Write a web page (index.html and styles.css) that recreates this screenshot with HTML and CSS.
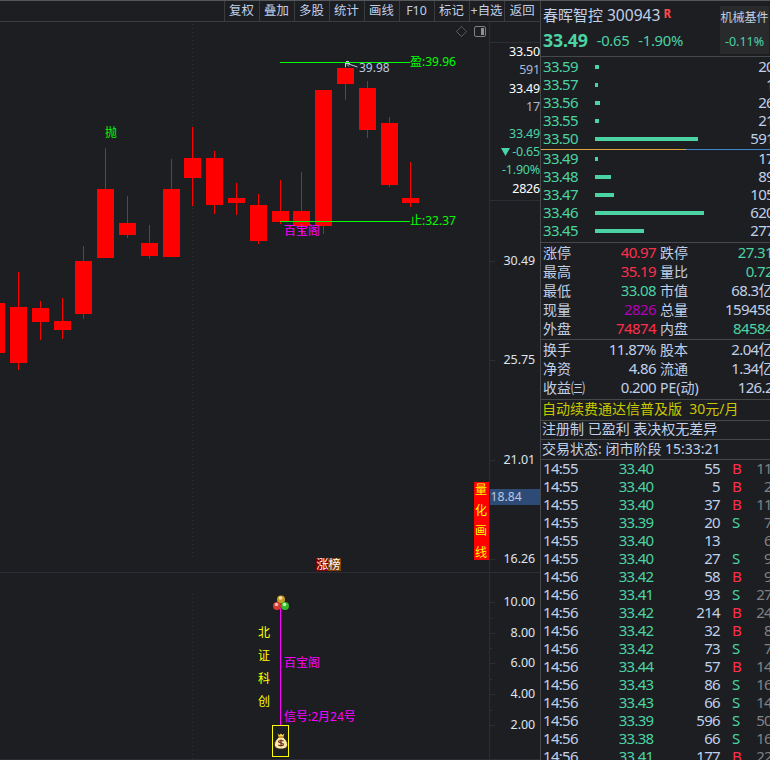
FILE: index.html
```
<!DOCTYPE html>
<html lang="zh-CN">
<head>
<meta charset="UTF-8">
<title>春晖智控 300943</title>
<link rel="stylesheet" href="styles.css">
</head>
<body>
<div class="app">
<div class="left">
<div class="toolbar">
<span class="tool">复权</span>
<span class="tool">叠加</span>
<span class="tool">多股</span>
<span class="tool">统计</span>
<span class="tool">画线</span>
<span class="tool">F10</span>
<span class="tool">标记</span>
<span class="tool">+自选</span>
<span class="tool last">返回</span>
</div>
<div class="charts">
<svg class="plot" width="489" height="738" viewBox="0 22 489 738">
<!-- grid -->
<g class="dots">
<path d="M192.5 24V558"/>
<path d="M192.5 594V759"/>
</g>
<path class="rule" d="M0 572.5H489M0 759.5H489"/>
<!-- pane buttons -->
<path class="diamond" d="M461.5 26.500l5 5-5 5-5-5z"/>
<rect class="pane" x="474.500" y="26.500" width="11" height="10" rx="1.500"/>
<rect class="pane-fill" x="481" y="28" width="3" height="7"/>
<!-- candles -->
<g class="wick">
<path d="M18.500 272V370M40.500 301V340M62.500 298V339M83.500 246V319M105.500 148V258M127.500 196V238M149.500 225V259M171.500 159V257M192.500 127V206M214.500 151V214M236.500 183V215M258.500 194V244M280.500 180V224M301.500 172V234M323.500 90V234M345.500 63V100M367.500 81V138M389.500 117V187M410.500 162V207"/>
</g>
<g class="candle">
<rect x="0" y="303" width="5" height="50"/>
<rect x="10" y="307" width="17" height="56"/>
<rect x="32" y="308" width="17" height="14"/>
<rect x="54" y="321" width="17" height="9"/>
<rect x="75" y="261" width="17" height="53"/>
<rect x="97" y="189" width="17" height="69"/>
<rect x="119" y="223" width="17" height="12"/>
<rect x="141" y="243" width="17" height="13"/>
<rect x="163" y="189" width="17" height="68"/>
<rect x="184" y="158" width="17" height="20"/>
<rect x="206" y="158" width="17" height="47"/>
<rect x="228" y="198" width="17" height="5"/>
<rect x="250" y="205" width="17" height="36"/>
<rect x="272" y="211" width="17" height="11"/>
<rect x="293" y="211" width="17" height="15"/>
<rect x="315" y="90" width="17" height="136"/>
<rect x="337" y="68" width="17" height="16"/>
<rect x="359" y="88" width="17" height="42"/>
<rect x="381" y="123" width="17" height="62"/>
<rect x="402" y="198" width="17" height="5"/>
</g>
<path class="target" d="M280 62.500H410M280 221.500H410"/>
<path class="pointer" d="M345.500 67v-4l12 4M346 61.500h3M346 63.500h4M347 64.500l2 2"/>
<text class="green" x="105" y="137">抛</text>
<text class="green" x="410" y="66">盈:39.96</text>
<text class="green" x="410" y="225">止:32.37</text>
<text class="high" x="359" y="72">39.98</text>
<text class="pink" x="284" y="235">百宝阁</text>
<!-- list tag -->
<rect class="tag-red" x="316" y="558" width="12" height="13"/>
<rect class="tag-brown" x="328" y="558" width="13" height="13"/>
<text class="white" x="316.500" y="569">涨榜</text>
<rect class="side-tag" x="474" y="482" width="15" height="78"/>
<g class="yellow">
<text x="475" y="494">量</text>
<text x="475" y="515">化</text>
<text x="475" y="535">画</text>
<text x="475" y="557">线</text>
<text x="258" y="637">北</text>
<text x="258" y="660">证</text>
<text x="258" y="683">科</text>
<text x="258" y="706">创</text>
</g>
<!-- signal -->
<path class="signal" d="M280.500 608V725"/>
<text class="pink" x="284" y="667">百宝阁</text>
<text class="pink" x="284" y="721">信号:2月24号</text>
<circle cx="281" cy="599.500" r="4" fill="#c79a26"/>
<circle cx="280.500" cy="598" r="1.800" fill="#f6e3a0"/>
<circle cx="277" cy="606" r="4" fill="#d53a32"/>
<circle cx="276.500" cy="604.500" r="1.800" fill="#f8b5ae"/>
<circle cx="285" cy="606" r="4" fill="#35b52c"/>
<circle cx="284.500" cy="604.500" r="1.800" fill="#b8f5a8"/>
<rect class="bag-box" x="272.500" y="725.500" width="16" height="31"/>
<path d="M277.500 733.500l2 1.500 1.500-1.500 1.500 1.500 2-1.500-1.500 4h-4z" fill="#f2d84c"/>
<path d="M279 737h4c2 2 4.500 4 4.500 7.500 0 3-2.500 4.500-6.500 4.500s-6.500-1.500-6.500-4.500c0-3.500 2.500-5.500 4.500-7.500z" fill="#fbeaa6" stroke="#3a1d10" stroke-width=".8"/>
<path d="M278.500 737h5" stroke="#e09a20" stroke-width="1.500"/>
<path d="M283.500 741.200c-1-1-5-1-5 .6s5 .8 5 2.500-4 1.700-5.200.5M281 739.500v7" fill="none" stroke="#6b2a20" stroke-width="1.200"/>
</svg>
<div class="axis">
<div class="quote">
<div class="bright">33.50</div>
<div class="dim">591</div>
<div class="bright">33.49</div>
<div class="dim">17</div>
<div class="down gap">33.49</div>
<div class="down"><svg class="tri" width="9" height="8" viewBox="0 0 9 8"><path d="M0 0h9L4.500 8z"/></svg>-0.65</div>
<div class="down">-1.90%</div>
<div class="bright">2826</div>
</div>
<svg class="scale" width="50" height="559" viewBox="490 201 50 559">
<path class="rule" d="M490 261.500h5M490 360.500h5M490 460.500h5M490 559.500h5M490 572.500h50M490 602.500h5M490 618.500h2M490 633.500h5M490 648.500h2M490 663.500h5M490 679.500h2M490 694.500h5M490 710.500h2M490 725.500h5M490 759.500h50"/>
<rect class="cursor" x="490" y="489" width="50" height="16"/>
<text class="cursor-text" x="490.500" y="501">18.84</text>
<g class="price">
<text x="535" y="265">30.49</text>
<text x="535" y="364">25.75</text>
<text x="535" y="464">21.01</text>
<text x="535" y="563">16.26</text>
<text x="535" y="606">10.00</text>
<text x="535" y="637">8.00</text>
<text x="535" y="667">6.00</text>
<text x="535" y="698">4.00</text>
<text x="535" y="729">2.00</text>
</g>
</svg>
</div>
</div>
</div>
<div class="panel">
<div class="head">
<div class="names">
<div class="name">春晖智控 <span class="code">300943</span><sup>R</sup></div>
<div class="last-price"><b>33.49</b><span>-0.65</span><span>-1.90%</span></div>
</div>
<div class="sector"><div>机械基件</div><div class="pct">-0.11%</div></div>
</div>
<div class="book asks">
<div class="level"><span>33.59</span><i class="bar" style="width: 4px"></i><em>20</em></div>
<div class="level"><span>33.57</span><i class="bar" style="width: 3px"></i><em>1</em></div>
<div class="level"><span>33.56</span><i class="bar" style="width: 5px"></i><em>26</em></div>
<div class="level"><span>33.55</span><i class="bar" style="width: 4px"></i><em>21</em></div>
<div class="level"><span>33.50</span><i class="bar" style="width: 103px"></i><em>591</em></div>
</div>
<div class="ratio"></div>
<div class="book bids">
<div class="level"><span>33.49</span><i class="bar" style="width: 3px"></i><em>17</em></div>
<div class="level"><span>33.48</span><i class="bar" style="width: 16px"></i><em>89</em></div>
<div class="level"><span>33.47</span><i class="bar" style="width: 19px"></i><em>105</em></div>
<div class="level"><span>33.46</span><i class="bar" style="width: 109px"></i><em>620</em></div>
<div class="level"><span>33.45</span><i class="bar" style="width: 49px"></i><em>277</em></div>
</div>
<div class="stats first">
<div class="stat"><span>涨停</span><em class="up">40.97</em><span>跌停</span><em class="down">27.31</em></div>
<div class="stat"><span>最高</span><em class="up">35.19</em><span>量比</span><em class="down">0.72</em></div>
<div class="stat"><span>最低</span><em class="down">33.08</em><span>市值</span><em>68.3亿</em></div>
<div class="stat"><span>现量</span><em class="purple">2826</em><span>总量</span><em>159458</em></div>
<div class="stat"><span>外盘</span><em class="up">74874</em><span>内盘</span><em class="down">84584</em></div>
</div>
<div class="stats second">
<div class="stat"><span>换手</span><em>11.87%</em><span>股本</span><em>2.04亿</em></div>
<div class="stat"><span>净资</span><em>4.86</em><span>流通</span><em>1.34亿</em></div>
<div class="stat"><span>收益㈢</span><em>0.200</em><span>PE(动)</span><em>126.2</em></div>
</div>
<div class="note promo">自动续费通达信普及版&nbsp; 30元/月</div>
<div class="note issue">注册制 已盈利 表决权无差异</div>
<div class="note">交易状态: 闭市阶段 15:33:21</div>
<div class="ticks">
<div class="tick"><span>14:55</span><em class="down">33.40</em><em>55</em><b class="up">B</b><i>11</i></div>
<div class="tick"><span>14:55</span><em class="down">33.40</em><em>5</em><b class="up">B</b><i>2</i></div>
<div class="tick"><span>14:55</span><em class="down">33.40</em><em>37</em><b class="up">B</b><i>11</i></div>
<div class="tick"><span>14:55</span><em class="down">33.39</em><em>20</em><b class="down">S</b><i>7</i></div>
<div class="tick"><span>14:55</span><em class="down">33.40</em><em>13</em><b></b><i>6</i></div>
<div class="tick"><span>14:55</span><em class="down">33.40</em><em>27</em><b class="down">S</b><i>9</i></div>
<div class="tick"><span>14:56</span><em class="down">33.42</em><em>58</em><b class="up">B</b><i>9</i></div>
<div class="tick"><span>14:56</span><em class="down">33.41</em><em>93</em><b class="down">S</b><i>27</i></div>
<div class="tick"><span>14:56</span><em class="down">33.42</em><em>214</em><b class="up">B</b><i>24</i></div>
<div class="tick"><span>14:56</span><em class="down">33.42</em><em>32</em><b class="up">B</b><i>8</i></div>
<div class="tick"><span>14:56</span><em class="down">33.42</em><em>73</em><b class="down">S</b><i>7</i></div>
<div class="tick"><span>14:56</span><em class="down">33.44</em><em>57</em><b class="up">B</b><i>14</i></div>
<div class="tick"><span>14:56</span><em class="down">33.43</em><em>86</em><b class="down">S</b><i>16</i></div>
<div class="tick"><span>14:56</span><em class="down">33.43</em><em>66</em><b class="down">S</b><i>14</i></div>
<div class="tick"><span>14:56</span><em class="down">33.39</em><em>596</em><b class="down">S</b><i>50</i></div>
<div class="tick"><span>14:56</span><em class="down">33.38</em><em>66</em><b class="down">S</b><i>16</i></div>
<div class="tick"><span>14:56</span><em class="down">33.41</em><em>177</em><b class="up">B</b><i>22</i></div>
</div>
</div>
</div>
</body>
</html>
```
FILE: styles.css
```
* {
box-sizing: border-box;
}
body {
margin: 0;
background: #1d1e21;
color: #c0d0e8;
font-family: "Noto Sans", "Noto Sans CJK SC", sans-serif;
font-size: 14px;
overflow: hidden;
}
em, i {
font-style: normal;
}
.app {
display: flex;
width: 770px;
height: 760px;
border-top: 1px solid #55585a;
overflow: hidden;
}
.left {
width: 540px;
flex: none;
}
.toolbar {
display: flex;
justify-content: flex-end;
height: 21px;
border-bottom: 1px solid #3a3c3e;
}
.tool {
width: 35px;
height: 20px;
border-left: 1px solid #3a3c3e;
font-size: 12.4px;
line-height: 19px;
text-align: center;
white-space: nowrap;
overflow: hidden;
}
.tool.last {
width: 36.500px;
}
.charts {
display: flex;
height: 738px;
}
.plot {
display: block;
flex: none;
}
.plot text, .scale text {
font-size: 12px;
}
.dots path {
stroke: #2e3033;
stroke-dasharray: 1 3;
}
.rule {
stroke: #2c2d35;
fill: none;
}
.diamond, .pane {
fill: none;
stroke: #808080;
}
.diamond {
stroke-dasharray: 1 .5;
}
.pane-fill {
fill: #909090;
}
.candle {
fill: #f00;
}
.wick {
stroke: #f00;
}
.target {
stroke: #0f0;
}
.pointer {
stroke: #c0d0e8;
fill: none;
}
.green {
fill: #0f0;
}
.high {
fill: #b9c8e0;
}
.pink {
fill: #f0f;
}
.white {
fill: #fff;
}
.yellow {
fill: #ff0;
}
.tag-red {
fill: #800000;
}
.tag-brown {
fill: #804000;
}
.side-tag {
fill: #f00;
}
.signal {
stroke: #f0f;
}
.bag-box {
fill: none;
stroke: #ff0;
}
.axis {
width: 51px;
border-left: 1px solid #2c2d35;
}
.quote {
height: 159px;
margin-top: 20px;
border-top: 1px solid #2c2d35;
border-bottom: 1px solid #2c2d35;
font-size: 12.5px;
line-height: 18px;
text-align: right;
letter-spacing: -.2px;
white-space: nowrap;
}
.quote div {
height: 18.300px;
}
.quote .gap {
margin-top: 8.500px;
}
.tri {
fill: #4bd3a4;
margin-right: 2px;
}
.bright {
color: #fff;
}
.dim {
color: #a9b9d4;
}
.up {
color: #ff2e4c;
}
.down {
color: #4bd3a4;
}
.purple {
color: #b400b4;
}
.scale {
display: block;
}
.scale .price {
fill: #dde4ee;
text-anchor: end;
}
.scale .price text {
font-size: 12.5px;
letter-spacing: -.1px;
}
.cursor {
fill: #2e4b78;
}
.scale .cursor-text {
fill: #b9c8e0;
font-size: 12.2px;
}
.panel {
width: 230px;
flex: none;
border-left: 1px solid #46484a;
overflow: hidden;
}
.head {
display: flex;
height: 56px;
border-bottom: 1px solid #46484a;
}
.names {
width: 179px;
padding-left: 2px;
white-space: nowrap;
}
.name {
height: 28px;
font-size: 15px;
line-height: 29px;
}
.code {
font-size: 15.600px;
}
.name sup {
margin-left: 3px;
color: #ff4a4a;
font-size: 11.500px;
font-weight: bold;
line-height: 0;
vertical-align: 3px;
}
.last-price {
display: flex;
gap: 9px;
color: #4bd3a4;
font-size: 14.800px;
line-height: 22px;
letter-spacing: -.3px;
}
.last-price b {
font-size: 17.800px;
letter-spacing: -.2px;
}
.sector {
width: 49px;
height: 48px;
margin-top: 5px;
background: #292a2c;
font-size: 12px;
line-height: 24px;
text-align: center;
white-space: nowrap;
}
.sector .pct {
color: #4bd3a4;
font-size: 12.500px;
}
.level {
display: grid;
grid-template-columns: 52px 120px 59px;
align-items: center;
width: 231px;
height: 18px;
padding-left: 2px;
font-size: 15px;
line-height: 16px;
letter-spacing: -.7px;
}
.asks {
height: 92px;
padding-top: 1px;
}
.level span {
height: 18px;
color: #4bd3a4;
}
.level em {
height: 18px;
text-align: right;
}
.bar {
height: 4px;
background: #4bd3a4;
}
.ratio {
height: 1px;
background: linear-gradient(90deg, #dfa43a 145px, #3f87d0 145px);
}
.bids {
height: 93px;
border-bottom: 1px solid #46484a;
}
.stats {
border-bottom: 1px solid #46484a;
}
.stats.first {
height: 97px;
}
.stats.second {
height: 60px;
}
.stat {
display: grid;
grid-template-columns: 46px 67px 50px 67px;
width: 233px;
height: 19px;
padding-left: 2px;
line-height: 19px;
white-space: nowrap;
}
.stat em {
font-size: 15px;
letter-spacing: -.6px;
text-align: right;
}
.stat em + span {
padding-left: 4px;
}
.note {
height: 20px;
padding-left: 1px;
border-bottom: 1px solid #46484a;
line-height: 18px;
white-space: nowrap;
}
.promo {
height: 21px;
color: #c8c800;
}
.issue {
height: 19px;
line-height: 16px;
}
.tick {
display: grid;
grid-template-columns: 50px 60.500px 66.500px 22px 30px;
width: 232px;
height: 18px;
padding-left: 2px;
font-size: 15px;
line-height: 17px;
letter-spacing: -.7px;
}
.tick em {
text-align: right;
}
.tick b {
padding-left: 12px;
font-weight: normal;
}
.tick i {
color: #808286;
text-align: right;
}
```
